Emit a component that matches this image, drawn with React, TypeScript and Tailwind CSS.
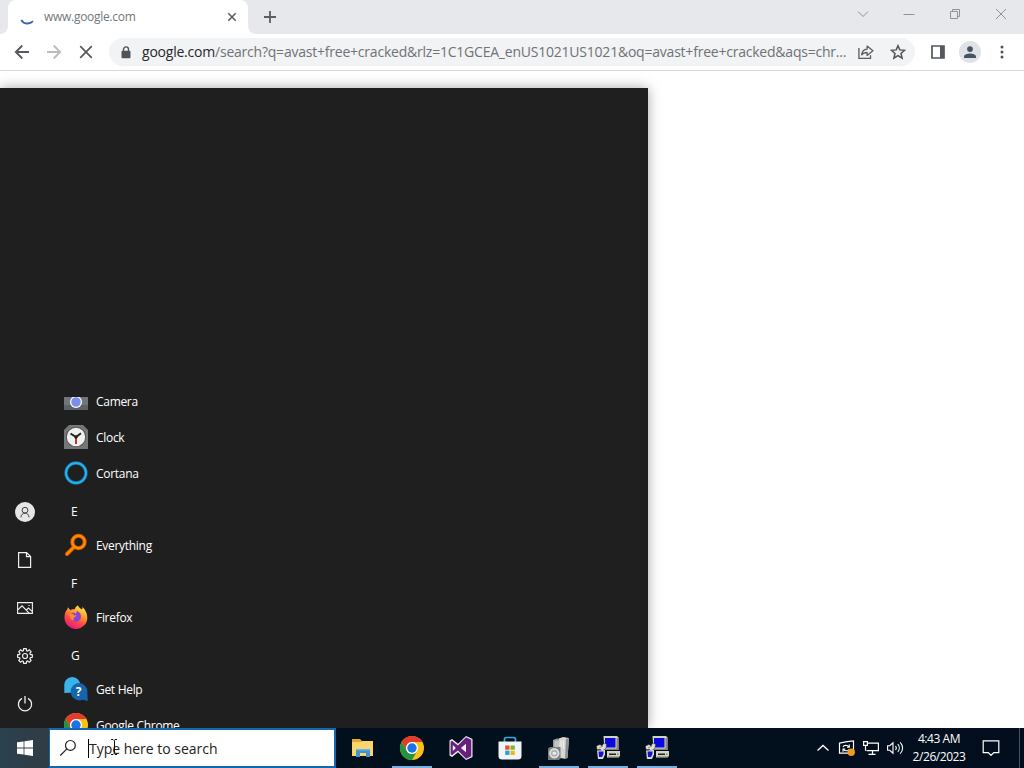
import React from 'react';

const font = "font-['Open_Sans','Noto_Sans',sans-serif]";

const ChromeLogo: React.FC = () => (
  <svg width="24" height="24" viewBox="0 0 24 24" className="shrink-0">
    <circle cx="12" cy="12" r="12" fill="#fbc116" />
    <path d="M1.6 6A12 12 0 0 1 22.4 6H12a6 6 0 0 0-5.2 9z" fill="#e33b2e" />
    <path d="M1.6 6A12 12 0 0 0 12 24l5.2-9a6 6 0 0 1-10.4 0z" fill="#229342" />
    <circle cx="12" cy="12" r="6" fill="#fff" />
    <circle cx="12" cy="12" r="4.7" fill="#1a73e8" />
  </svg>
);

const CameraLogo = () => (
  <svg width="24" height="24" viewBox="0 0 24 24">
    <path d="M0 5h24v16H0z" fill="#71767b" />
    <path d="M0 16h24v5H0z" fill="#5d6266" />
    <circle cx="12" cy="13" r="6" fill="#fff" />
    <circle cx="12" cy="13" r="4.8" fill="#7b8fe8" />
  </svg>
);

const ClockLogo = () => (
  <svg width="24" height="24" viewBox="0 0 24 24">
    <path d="M0 5 5 0h14l5 5v19H0z" fill="#74787b" />
    <circle cx="12" cy="12" r="10.2" fill="#4f5457" />
    <circle cx="12" cy="12" r="9.2" fill="#f0f0ee" />
    <path d="M6.5 8.5 12 12l5-3.8" fill="none" stroke="#222" strokeWidth="2" />
    <path d="M12 12v7" stroke="#b8202a" strokeWidth="1.8" />
    <circle cx="12" cy="12" r="1.7" fill="#222" />
  </svg>
);

const CortanaLogo = () => (
  <svg width="24" height="24" viewBox="0 0 24 24">
    <circle cx="12" cy="12" r="10" fill="none" stroke="#136ea5" strokeWidth="3.4" />
    <circle cx="12" cy="12" r="10" fill="none" stroke="#27b2e8" strokeWidth="1.9" />
  </svg>
);

const EverythingLogo = () => (
  <svg width="24" height="24" viewBox="0 0 24 24" fill="none">
    <path d="m10 14-7 7" stroke="#d95c00" strokeWidth="4" strokeLinecap="round" />
    <circle cx="14.5" cy="9" r="6.2" stroke="#d95c00" strokeWidth="4" />
    <path d="m10 14-7 7" stroke="#ff8a00" strokeWidth="2.2" strokeLinecap="round" />
    <circle cx="14.5" cy="9" r="6.2" stroke="#ff8a00" strokeWidth="2.2" />
  </svg>
);

const FirefoxLogo = () => (
  <svg width="24" height="24" viewBox="0 0 24 24">
    <defs>
      <linearGradient id="fox" x1="0.8" y1="0" x2="0.3" y2="1">
        <stop offset="0" stopColor="#fff44f" />
        <stop offset="0.35" stopColor="#ffa22c" />
        <stop offset="0.65" stopColor="#ff4a45" />
        <stop offset="1" stopColor="#e31587" />
      </linearGradient>
    </defs>
    <path d="M3.2 4.5 4 2.2l2.4 3C8 4 8.8 4.2 10.5 4.4c.6-1.8 1.8-3 3.5-4.2.6 2.2 2.2 3.2 4.2 4.4l.3-2.6c3 3 4.8 6.5 4.8 10.5A11.4 11.4 0 0 1 .5 12.8C.4 9.3 1.2 6.4 3.2 4.5z" fill="url(#fox)" />
    <path d="M7 8.5c2-1.5 3.7-.3 5 .3C13 7 12 6.3 13.2 6c3 1.2 4.2 4 3.6 6.6a5 5 0 0 1-9.2 1.8z" fill="#8a43d6" />
    <path d="M5.5 9c2-1 3.6 0 4.5 1.2l2.5.1c-.5 1.5-1.7 1.8-2.8 2.5-.5.8-.2 2 .6 2.6-2.6.2-5-2.4-4.8-6.4z" fill="#ff8b2d" />
  </svg>
);

const GetHelpLogo = () => (
  <svg width="24" height="24" viewBox="0 0 24 24">
    <path d="M8 0a8 8 0 1 1-1.5 15.8L.3 16V9A8 8 0 0 1 8 0z" fill="#3ab2ea" />
    <path d="M15 6a8.7 8.7 0 0 1 8.3 10l.5 8-5.3-1.2A8.7 8.7 0 1 1 15 6z" fill="#1664ab" />
    <text x="14.5" y="19" textAnchor="middle" fontSize="12" fontWeight="700" fontFamily="Open Sans" fill="#fff">?</text>
  </svg>
);

type MenuEntry = { label: string; icon?: React.ReactNode };

const entries: MenuEntry[] = [
  { label: 'Camera', icon: <CameraLogo /> },
  { label: 'Clock', icon: <ClockLogo /> },
  { label: 'Cortana', icon: <CortanaLogo /> },
  { label: 'E' },
  { label: 'Everything', icon: <EverythingLogo /> },
  { label: 'F' },
  { label: 'Firefox', icon: <FirefoxLogo /> },
  { label: 'G' },
  { label: 'Get Help', icon: <GetHelpLogo /> },
  { label: 'Google Chrome', icon: <ChromeLogo /> },
];

const TabStrip = () => (
  <div className="flex h-[34px] shrink-0 bg-[#e7e8eb]">
    <div className="flex w-2 items-end bg-white">
      <div className="h-full w-full rounded-br-lg bg-[#e7e8eb]" />
    </div>
    <div className="bg-[#e7e8eb]">
      <div className="flex h-[34px] w-60 items-center rounded-t-lg bg-white pr-2.5 pl-3">
        <svg width="16" height="16" viewBox="0 0 16 16" fill="none" className="mt-0.5">
          <path d="M1.3 9.8c2.1 4.3 8.2 5 11.7 1.4" stroke="#3568b0" strokeWidth="1.9" />
        </svg>
        <span className="ml-2 text-[12px] tracking-[-0.28px] text-[#74777a]">www.google.com</span>
        <svg width="12" height="12" viewBox="0 0 12 12" className="ml-auto" stroke="#55585c" strokeWidth="1.5">
          <path d="m2.3 2.3 7.4 7.4M9.7 2.3 2.3 9.7" />
        </svg>
      </div>
    </div>
    <div className="w-2 bg-white">
      <div className="h-full w-full rounded-bl-lg bg-[#e7e8eb]" />
    </div>
    <svg width="14" height="14" viewBox="0 0 14 14" className="mt-[10px] ml-[7px]" stroke="#5a5d61" strokeWidth="1.8">
      <path d="M7 1v12M1 7h12" />
    </svg>
    <div className="ml-auto flex h-7 items-center pr-[17px] text-[#909296]">
      <svg width="12" height="12" viewBox="0 0 12 12" fill="none" stroke="currentColor">
        <path d="m1 3.5 5 5 5-5" />
      </svg>
      <svg width="12" height="12" viewBox="0 0 12 12" className="ml-[34px]" fill="none" stroke="currentColor">
        <path d="M.5 6.5h11" />
      </svg>
      <svg width="12" height="12" viewBox="0 0 12 12" className="ml-[34px]" fill="none" stroke="currentColor">
        <path d="M1.5 3.5h7v7h-7zM3.5 3.5v-2h7v7h-2" />
      </svg>
      <svg width="12" height="12" viewBox="0 0 12 12" className="ml-[34px]" fill="none" stroke="currentColor">
        <path d="m1 1 10 10M11 1 1 11" />
      </svg>
    </div>
  </div>
);

const Toolbar = () => (
  <div className="flex h-[37px] shrink-0 items-center border-b border-[#d9dadb] bg-white pr-[14px] pl-[14px]">
    <svg width="16" height="16" viewBox="0 0 16 16" fill="none" stroke="#55585c" strokeWidth="1.8">
      <path d="M15 8H2M8.3 1.5 1.8 8l6.5 6.5" />
    </svg>
    <svg width="16" height="16" viewBox="0 0 16 16" className="ml-4" fill="none" stroke="#b9bbbd" strokeWidth="1.8">
      <path d="M1 8h13M7.7 1.5 14.2 8l-6.5 6.5" />
    </svg>
    <svg width="16" height="16" viewBox="0 0 16 16" className="ml-4" fill="none" stroke="#55585c" strokeWidth="1.7">
      <path d="m2.2 2.2 11.6 11.6M13.8 2.2 2.2 13.8" />
    </svg>
    <div className="ml-[15px] flex h-7 w-[806px] shrink-0 items-center rounded-full bg-[#f1f3f4] pl-3">
      <svg width="10" height="13" viewBox="0 0 10 13" className="shrink-0">
        <rect x="0.5" y="4.7" width="9" height="7.6" rx="1" fill="#505357" />
        <path d="M2.5 5V3.4a2.5 2.5 0 0 1 5 0V5" fill="none" stroke="#505357" strokeWidth="1.4" />
      </svg>
      <span className="ml-[11px] w-[706px] shrink-0 text-[14px] leading-5 tracking-[-0.22px] whitespace-nowrap text-[#6f7276]">
        <span className="text-[#25282c]">google.com</span>
        /search?q=avast+free+cracked&amp;rlz=1C1GCEA_enUS1021US1021&amp;oq=avast+free+cracked&amp;aqs=chr...
      </span>
      <svg width="16" height="16" viewBox="0 0 16 16" className="ml-[10px] shrink-0" fill="none" stroke="#5a5d61" strokeWidth="1.3">
        <path d="M.9 4v10.3h11.6v-3" />
        <path d="M3.7 10.9c.3-3.7 2.3-5.5 5.4-5.7V2.1l5.8 4.7-5.8 4.6V8.5c-2.4 0-4.2.6-5.4 2.4z" strokeLinejoin="round" />
      </svg>
      <svg width="16" height="16" viewBox="0 0 16 16" className="ml-4 shrink-0" fill="none" stroke="#505357" strokeWidth="1.5">
        <path d="m8 1.7 1.8 4.2 4.8.4-3.6 3.2 1.1 4.6L8 11.7l-4.1 2.4L5 9.5 1.4 6.3l4.8-.4z" />
      </svg>
    </div>
    <svg width="14" height="14" viewBox="0 0 14 14" className="ml-4 shrink-0">
      <path d="M1 1h12v12H1z" fill="none" stroke="#55585c" strokeWidth="1.7" />
      <path d="M9 1h4v12H9z" fill="#55585c" />
    </svg>
    <div className="ml-[14px] flex size-[22px] shrink-0 items-center justify-center rounded-full bg-[#dfe3e7]">
      <svg width="14" height="14" viewBox="0 0 14 14" fill="#465461">
        <circle cx="7" cy="4.1" r="2.9" />
        <path d="M1 13v-1.6C1 9.4 4.5 8.4 7 8.4s6 1 6 3V13z" />
      </svg>
    </div>
    <svg width="4" height="16" viewBox="0 0 4 16" className="mr-1.5 ml-auto shrink-0" fill="#505357">
      <circle cx="2" cy="3" r="1.5" />
      <circle cx="2" cy="8" r="1.5" />
      <circle cx="2" cy="13" r="1.5" />
    </svg>
  </div>
);

const Rail = () => (
  <div className="flex w-[50px] flex-col justify-end text-[#f0f0f0]">
    <div className="flex h-12 items-center justify-center">
      <div className="flex size-5 items-center justify-center rounded-full bg-[#e6e6e6]">
        <svg width="12" height="12" viewBox="0 0 12 12" fill="none" stroke="#3f3f3f">
          <circle cx="6" cy="4.2" r="2.9" />
          <path d="M1.9 11.3C2.2 8.5 4 7.1 6 7.1s3.8 1.4 4.1 4.2" />
        </svg>
      </div>
    </div>
    <div className="flex h-12 items-center justify-center">
      <svg width="16" height="16" viewBox="0 0 16 16" fill="none" stroke="currentColor" strokeWidth="1.2">
        <path d="M1.6.6h8l4 4v10.8h-12zM9.5.6v4.1h4.1" />
      </svg>
    </div>
    <div className="flex h-12 items-center justify-center">
      <svg width="16" height="12" viewBox="0 0 16 12" fill="none" stroke="currentColor" strokeWidth="1.1">
        <path d="M.6.6h14.8v10.8H.6zM.6 8.2 5 3.9l7.2 7.3M9.3 8l2.2-2 3.9 3.7" />
        <path d="M11.5 3.5h1.2" />
      </svg>
    </div>
    <div className="flex h-12 items-center justify-center">
      <svg width="16" height="16" viewBox="0 0 16 16" fill="none" stroke="currentColor" strokeWidth="1.2">
        <path d="m6.7.7-.4 2-1 .4-1.7-1.2-1.8 1.8L3 5.4l-.4 1-2 .4v2.5l2 .4.4 1-1.2 1.7 1.8 1.8 1.7-1.2 1 .4.4 2h2.5l.4-2 1-.4 1.7 1.2 1.8-1.8-1.2-1.7.4-1 2-.4V6.8l-2-.4-.4-1 1.2-1.7-1.8-1.8-1.7 1.2-1-.4-.4-2z" />
        <circle cx="8" cy="8" r="2.5" />
      </svg>
    </div>
    <div className="flex h-12 items-center justify-center">
      <svg width="16" height="16" viewBox="0 0 16 16" fill="none" stroke="currentColor" strokeWidth="1.3">
        <path d="M5 2.4a6.6 6.6 0 1 0 6 0M8 0v7.5" />
      </svg>
    </div>
  </div>
);

const StartMenu = () => (
  <div className="flex h-[640px] w-[648px] bg-[#1f1f1f] shadow-[0_0_12px_rgba(0,0,0,0.35)]">
    <Rail />
    <div className="mt-[309px] h-[331px] flex-1 overflow-hidden">
      <div className="-mt-[13px] text-[12px] text-white">
        {entries.map(({ label, icon }) =>
          icon ? (
            <div key={label} className="flex h-9 items-center gap-2 pb-0.5 pl-[14px]">
              {icon}
              <span className="pt-px leading-4 tracking-[-0.3px]">{label}</span>
            </div>
          ) : (
            <div key={label} className="flex h-9 items-center pt-[3px] pl-[21px]">{label}</div>
          )
        )}
      </div>
    </div>
  </div>
);

const FolderLogo = () => (
  <svg width="24" height="24" viewBox="0 0 24 24">
    <path d="M1 3h8l2 2h11v4H1z" fill="#e3a72c" />
    <path d="M1 6h9l2-1h10v15H1z" fill="#fbd56c" />
    <path d="M5 21v-8h14v8h-4v-4H9v4z" fill="#3c94d4" />
    <path d="M5 13h14v1.5H5z" fill="#64b5e8" />
  </svg>
);

const VisualStudioLogo = () => (
  <svg width="24" height="24" viewBox="0 0 24 24">
    <path d="M17 0 23.5 3v18L17 24l-8-7.7L3 21 .5 19.5v-15L3 3l6 4.7z" fill="#f5eff8" />
    <path d="m17 1.3 5.3 2.5v16.4L17 22.7 8.9 14.6 3 19.3 1.6 18.6V5.4L3 4.7l5.9 4.7z" fill="#68217a" />
    <path d="M17 7.8 11.9 12l5.1 4.2zM3.8 9v6L6.9 12z" fill="#f5eff8" />
  </svg>
);

const StoreLogo = () => (
  <svg width="24" height="24" viewBox="0 0 24 24">
    <path d="M6.5 6V3.3C6.5 2 7 1.5 8.3 1.5h7.4c1.3 0 1.8.5 1.8 1.8V6" fill="none" stroke="#3ba7df" strokeWidth="1.7" />
    <path d="M.5 5.5h23V20a3.5 3.5 0 0 1-3.5 3.5H4A3.5 3.5 0 0 1 .5 20z" fill="#f2f5f7" />
    <path d="M7.2 9.5h4.3v4.2H7.2z" fill="#e95128" />
    <path d="M12.5 9.5h4.3v4.2h-4.3z" fill="#7db72f" />
    <path d="M7.2 14.7h4.3v4.2H7.2z" fill="#2c9fda" />
    <path d="M12.5 14.7h4.3v4.2h-4.3z" fill="#f4b51c" />
  </svg>
);

const InstallerLogo = () => (
  <svg width="24" height="24" viewBox="0 0 24 24">
    <path d="m6 4 4-1.5 6 .5v18l-10-.5z" fill="#9b9d9c" />
    <path d="m7.5 4.5 6 .5v8h-6z" fill="#c3c5c1" />
    <path d="m12 2.5 4-1.5 6 1-1.5 20-3 .8-5.5-1z" fill="#d6d7d3" />
    <path d="m19 3 3-1-1.5 20-2.5.7z" fill="#8c908f" />
    <path d="M14 4.5v8M16.5 4.5v8" stroke="#efefec" />
    <path d="M1 12.5 3 11h10.5v11.5L12 24H1z" fill="#777c7e" />
    <circle cx="7.3" cy="17.2" r="5.2" fill="#dcdddc" />
    <circle cx="7.3" cy="17.2" r="3.2" fill="#a9adae" />
    <circle cx="7.3" cy="17.2" r="1.8" fill="#ececea" />
  </svg>
);

const PuttyLogo = () => (
  <svg width="24" height="24" viewBox="0 0 24 24">
    <path d="M7.5 0H21l1.5 1.5V14H8.5z" fill="#d4d3c8" />
    <path d="M20.5 2h2v12H9v-1.5h11.5z" fill="#85857e" />
    <path d="M9 2h10.5v9.5H9z" fill="#0a0ae0" />
    <path d="M11 15h13v5l-1.5 1.5H11z" fill="#d4d3c8" />
    <path d="M13 17.5h7V19h-7z" fill="#222" />
    <path d="M12 20.5h11v1H12z" fill="#77776f" />
    <path d="M21 17.5h1.5V19H21z" fill="#4fa83b" />
    <path d="m.5 10 3.5-1.5L6 10l1.5-2.5 3 .5-.5 4-3.5 3-2-1.5L1 13.5z" fill="#e1e0d9" stroke="#333" strokeWidth="0.5" />
    <path d="M1 14.5 9 14v4.5l-2 4.5H2z" fill="#dad9d2" />
    <path d="M2.5 15.5h5V18l-1.5 3H3z" fill="#1212d8" />
    <path d="m3 12 4-2" stroke="#8b8b86" />
  </svg>
);

const apps = [
  { id: 'explorer', icon: <FolderLogo />, open: false },
  { id: 'chrome', icon: <ChromeLogo />, open: true },
  { id: 'visual-studio', icon: <VisualStudioLogo />, open: false },
  { id: 'store', icon: <StoreLogo />, open: false },
  { id: 'installer', icon: <InstallerLogo />, open: true },
  { id: 'putty-1', icon: <PuttyLogo />, open: true },
  { id: 'putty-2', icon: <PuttyLogo />, open: true },
];

const Tray = () => (
  <div className="ml-auto flex items-center text-white">
    <svg width="12" height="12" viewBox="0 0 12 12" fill="none" stroke="currentColor" strokeWidth="1.3">
      <path d="m.5 8.5 5.5-5 5.5 5" />
    </svg>
    <svg width="18" height="16" viewBox="0 0 18 16" className="ml-[9px]" fill="none" stroke="currentColor" strokeWidth="1.2">
      <path d="M1.5 3.2 9 1.7l6.5-.8V14l-6.5-.8H1.5z" />
      <path d="M5 7c.8-2 4.5-2.3 6 0M11.3 4.6V7.2H9M11.3 9.2c-1 2-4.4 2.3-6 0M5 11.7V9h2.3" strokeWidth="1.1" />
      <circle cx="13.2" cy="12.2" r="3.7" fill="#f39a1c" stroke="none" />
    </svg>
    <svg width="16" height="16" viewBox="0 0 16 16" className="ml-[7px]" fill="none" stroke="currentColor" strokeWidth="1.2">
      <path d="M5 3.1h10.4v7.6H3.5M9.5 10.7v3.5M5.5 14.4h7" />
      <path d="M.6 1.6h3.8v3.7H.6zM2.5 5.3v5.4" />
    </svg>
    <svg width="17" height="14" viewBox="0 0 17 14" className="ml-2" fill="none" stroke="currentColor" strokeWidth="1.1">
      <path d="M.6 4.7h2.2L6 1.8v10.4L2.8 9.3H.6zM8.5 5c1 1.2 1 2.8 0 4M10.8 3.2c2 2.2 2 5.4 0 7.6M13.2 1.3c3.2 3.3 3.2 8.1 0 11.4" />
    </svg>
    <div className="ml-[7px] flex w-[56px] flex-col items-center pb-px text-[12px] leading-[18px] tracking-[-0.45px] whitespace-nowrap">
      <span>4:43 AM</span>
      <span>2/26/2023</span>
    </div>
    <svg width="18" height="18" viewBox="0 0 18 18" className="ml-[15px]" fill="none" stroke="currentColor" strokeWidth="1.2">
      <path d="M1.2 1.9h15.6v11.7h-5L9 16.3l-2.8-2.7h-5z" />
    </svg>
    <div className="ml-[19px] h-10 w-[5px] border-l border-[#4b5360]" />
  </div>
);

const Taskbar = () => (
  <div className="flex h-10 shrink-0 bg-gradient-to-r from-[#02101c] to-[#020e1d]">
    <div className="flex w-[49px] items-center justify-center bg-gradient-to-r from-[#2a414d] to-[#303c46]">
      <svg width="16" height="16" viewBox="0 0 16 16" fill="#fff">
        <path d="M0 2.3 6.6 1.4v6.2H0zM7.4 1.3 16 0v7.6H7.4zM0 8.4h6.6v6.2L0 13.7zM7.4 8.4H16V16l-8.6-1.2z" />
      </svg>
    </div>
    <div className="relative flex w-[287px] items-center border-2 border-l-1 border-[#1269b0] bg-white">
      <svg width="18" height="18" viewBox="0 0 18 18" className="ml-[9px]" fill="none" stroke="#202020" strokeWidth="1.2">
        <circle cx="11.4" cy="6.4" r="4.9" />
        <path d="m7.9 9.9-6.6 6.6" />
      </svg>
      <div className="ml-[11px] h-[19px] w-px bg-black" />
      <span className="pt-0.5 text-[14px] leading-5 tracking-[-0.02px] whitespace-nowrap text-[#222]">Type here to search</span>
      {/* text cursor hovering over the search field */}
      <svg width="8" height="17" viewBox="0 0 8 17" className="absolute top-[9px] left-[60px]" fill="none" stroke="#111">
        <path d="M1 .5h2l1 1 1-1h2M4.5 1.5v13M1 15.5h2l1-1 1 1h2" />
      </svg>
    </div>
    <div className="ml-[2px] flex">
      {apps.map(({ id, icon, open }) => (
        <div key={id} className="flex w-[49px] flex-col items-center">
          <div className="flex h-[38px] items-center pt-0.5">{icon}</div>
          <div className={open ? 'h-0.5 w-10 bg-[#76b0e2]' : 'h-0.5'} />
        </div>
      ))}
    </div>
    <Tray />
  </div>
);

export default function App() {
  return (
    <div className={`flex h-[768px] w-[1024px] flex-col overflow-hidden bg-white ${font}`}>
      <TabStrip />
      <Toolbar />
      <div className="flex min-h-0 flex-1 items-end overflow-hidden">
        <StartMenu />
      </div>
      <Taskbar />
    </div>
  );
}
